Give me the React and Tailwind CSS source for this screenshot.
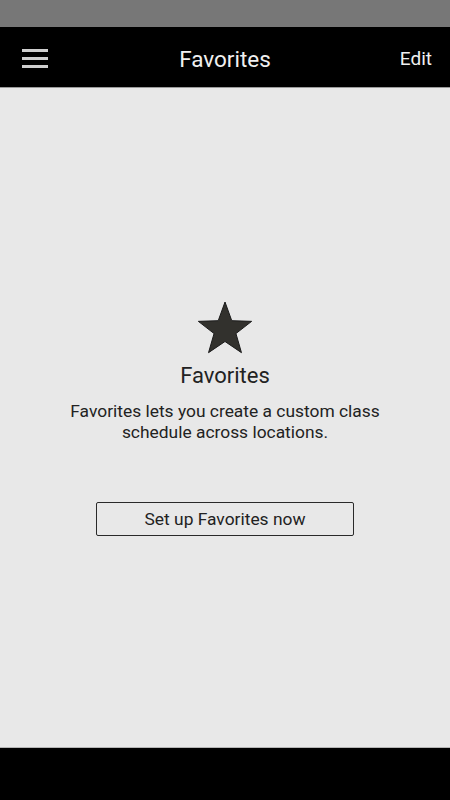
import React from "react";

function Star() {
  const pts = [];
  const cx = 28, cy = 30, R = 28, r = 11.5;
  for (let i = 0; i < 10; i++) {
    const a = (Math.PI / 5) * i - Math.PI / 2;
    const rad = i % 2 === 0 ? R : r;
    pts.push(`${(cx + rad * Math.cos(a)).toFixed(2)},${(cy + rad * Math.sin(a)).toFixed(2)}`);
  }
  return (
    <svg width="58" height="54" viewBox="-1 0 58 54">
      <polygon points={pts.join(" ")} fill="#32312d" stroke="#1a1a1a" strokeWidth="1" strokeLinejoin="round" />
    </svg>
  );
}

export default function App() {
  return (
    <div className="h-[800px] w-[450px] flex flex-col bg-[#e8e8e8] font-['Roboto',sans-serif]">
      {/* status bar */}
      <div className="h-[27px] bg-[#777777]" />

      {/* header */}
      <header className="h-[61px] bg-black grid grid-cols-[1fr_auto_1fr] items-center px-[22px] border-b border-[#9a9a9a]">
        <div className="w-[26px] flex flex-col gap-[5px] mt-[2px]">
          <span className="h-[3px] bg-[#cfcfcf]" />
          <span className="h-[3px] bg-[#cfcfcf]" />
          <span className="h-[3px] bg-[#cfcfcf]" />
        </div>
        <h1 className="text-[22.5px] leading-[28px] text-[#f0f0f0] mt-[3px]">Favorites</h1>
        <div className="flex justify-end">
          <button className="text-[19px] leading-[24px] text-[#f0f0f0] -mr-[4px] mt-[4px]">Edit</button>
        </div>
      </header>

      {/* content */}
      <main className="flex-1 flex flex-col items-center pt-[212px]">
        <Star />
        <h2 className="mt-[9px] text-[22px] leading-[26px] text-[#222]">Favorites</h2>
        <p className="mt-[12px] text-[17.4px] leading-[21px] text-[#222] text-center">
          Favorites lets you create a custom class
          <br />
          schedule across locations.
        </p>
        <button className="mt-[59px] w-[258px] h-[34px] border border-[#2a2a2a] rounded-[2px] text-[17.4px] text-[#222]">
          Set up Favorites now
        </button>
      </main>

      {/* bottom nav */}
      <div className="h-[53px] bg-black border-t border-[#b5b5b5]" />
    </div>
  );
}
